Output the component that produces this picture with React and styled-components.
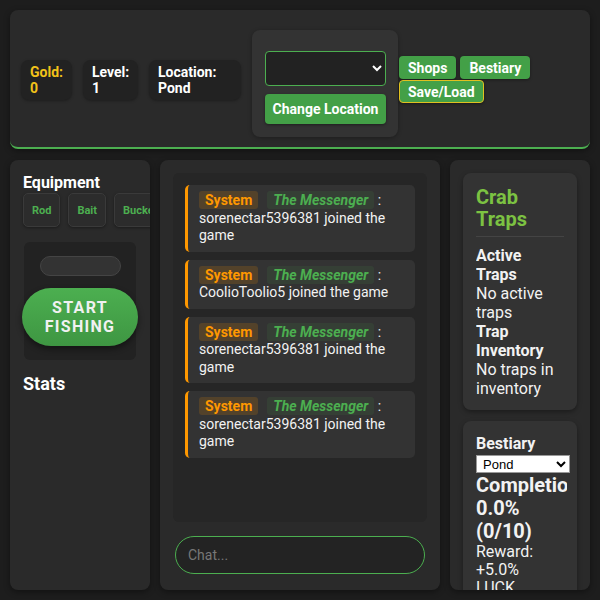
import React from "react";
import styled, { createGlobalStyle } from "styled-components";

const Global = createGlobalStyle`
  html, body {
    margin: 0;
    padding: 0;
    background: #1d1d1d;
    color: #fff;
    font-family: Roboto, "Liberation Sans", sans-serif;
    overflow: hidden;
  }
`;

const Page = styled.div`
  padding: 10px;
  display: flex;
  flex-direction: column;
  gap: 11px;
`;

const Header = styled.header`
  display: flex;
  align-items: center;
  gap: 11px;
  height: 99px;
  padding: 20px 11px 18px;
  background: #2a2a2a;
  border-radius: 8px;
  border-bottom: 2px solid #4caf50;
  box-shadow: 0 2px 6px rgba(0, 0, 0, 0.4);
`;

const Stat = styled.div`
  background: #222;
  border-radius: 8px;
  padding: 4px 9px;
  font-size: 14px;
  font-weight: 700;
  line-height: 16px;
  color: ${(p) => (p.$gold ? "#f2c31a" : "#fff")};
  width: ${(p) => p.$w || "auto"};
  box-sizing: border-box;
  box-shadow: 0 1px 3px rgba(0, 0, 0, 0.3);
`;

const LocationBox = styled.div`
  display: flex;
  flex-direction: column;
  gap: 8px;
  width: 146px;
  height: 107px;
  box-sizing: border-box;
  padding: 21px 12px 13px 13px;
  background: #333;
  border-radius: 8px;
  align-self: flex-start;
  box-shadow: 0 1px 4px rgba(0, 0, 0, 0.3);
`;

const Select = styled.select`
  width: 121px;
  height: 35px;
  background: #222;
  border: 1px solid #4caf50;
  border-radius: 4px;
  color: #fff;
`;

const GreenButton = styled.button`
  background: #43a047;
  color: #fff;
  border: ${(p) => (p.$save ? "1px solid #e0c020" : "1px solid transparent")};
  border-radius: 4px;
  font-family: inherit;
  font-weight: 700;
  font-size: 14px;
  line-height: 16px;
  padding: ${(p) => p.$pad || "3px 8px 2px"};
  width: ${(p) => p.$w || "auto"};
  height: ${(p) => p.$h || "auto"};
  box-shadow: 0 1px 3px rgba(0, 0, 0, 0.4);
`;

const ButtonGroup = styled.div`
  display: flex;
  flex-wrap: wrap;
  width: 136px;
  gap: 1px 4px;
  margin-left: -10px;
`;

const Main = styled.div`
  display: grid;
  grid-template-columns: 140px 280px 140px;
  gap: 10px;
  height: 430px;
`;

const Panel = styled.section`
  background: #2a2a2a;
  border-radius: 8px;
  padding: 13px;
  overflow: hidden;
  display: flex;
  flex-direction: column;
  box-sizing: border-box;
  box-shadow: 0 2px 6px rgba(0, 0, 0, 0.4);
`;

const Title = styled.h3`
  margin: ${(p) => p.$m || "0"};
  font-size: ${(p) => p.$size || "16px"};
  font-weight: 700;
  line-height: ${(p) => p.$lh || "19px"};
  color: ${(p) => p.$color || "#fff"};
`;

const EquipRow = styled.div`
  display: flex;
  gap: 8px;
  margin-top: 1px;
`;

const EquipSlot = styled.div`
  flex-shrink: 0;
  height: 34px;
  padding: 0 8px;
  box-sizing: border-box;
  border: 1px solid #3a3a3a;
  background: #2c2c2c;
  border-radius: 5px;
  display: flex;
  align-items: center;
  color: #4caf50;
  font-size: 11px;
  font-weight: 700;
  white-space: nowrap;
  box-shadow: 0 1px 3px rgba(0, 0, 0, 0.35);
`;

const FishingBox = styled.div`
  margin: 15px 1px 0;
  width: 112px;
  height: 118px;
  flex-shrink: 0;
  box-sizing: border-box;
  background: #222;
  border-radius: 6px;
  padding-top: 14px;
  display: flex;
  flex-direction: column;
  align-items: center;
  gap: 12px;
`;

const ProgressBar = styled.div`
  width: 81px;
  height: 20px;
  flex-shrink: 0;
  box-sizing: border-box;
  border-radius: 10px;
  background: #333;
  border: 1px solid #444;
`;

const StartButton = styled.button`
  width: 116px;
  height: 58px;
  flex-shrink: 0;
  border: none;
  border-radius: 29px;
  background: linear-gradient(180deg, #4caf50, #3e9642);
  color: #f1f1f1;
  font-family: inherit;
  font-weight: 700;
  font-size: 16px;
  line-height: 19px;
  letter-spacing: 1.3px;
  box-shadow: 0 3px 6px rgba(0, 0, 0, 0.45);
`;

const ChatLog = styled.div`
  height: 349px;
  flex-shrink: 0;
  box-sizing: border-box;
  background: #262626;
  border-radius: 6px;
  padding: 12px;
  display: flex;
  flex-direction: column;
  gap: 8px;
`;

const Message = styled.div`
  background: #333;
  border-left: 3px solid #ff9800;
  border-radius: 5px;
  padding: 7px 11px;
  font-size: 14px;
  line-height: 17.5px;
  color: #f2f2f2;
`;

const Tag = styled.span`
  font-weight: 700;
  padding: 1px 6px;
  margin-right: ${(p) => p.$mr || "0"};
  border-radius: 3px;
  font-style: ${(p) => (p.$italic ? "italic" : "normal")};
  color: ${(p) => p.$color};
  background: ${(p) => p.$bg};
`;

const ChatInput = styled.input`
  margin: 14px 2px 0;
  height: 38px;
  box-sizing: border-box;
  border: 1px solid #4caf50;
  border-radius: 20px;
  background: #232323;
  padding: 0 12px;
  font-family: inherit;
  font-size: 14px;
  color: #fff;
  &::placeholder {
    color: #777;
  }
`;

const InnerCard = styled.div`
  background: #333;
  border-radius: 8px;
  padding: 13px;
  flex-shrink: 0;
  height: ${(p) => p.$h || "auto"};
  box-sizing: border-box;
  margin-bottom: 11px;
  box-shadow: 0 2px 5px rgba(0, 0, 0, 0.35);
`;

const Divider = styled.hr`
  border: none;
  border-top: 1px solid #444;
  margin: 6px 0 9px;
`;

const Text = styled.div`
  font-size: ${(p) => p.$size || "16px"};
  font-weight: ${(p) => (p.$bold ? 700 : 400)};
  line-height: ${(p) => p.$lh || "19px"};
  color: #f2f2f2;
  max-width: ${(p) => p.$w || "none"};
  margin-right: ${(p) => p.$mr || "0"};
  white-space: ${(p) => (p.$nowrap ? "nowrap" : "normal")};
  overflow: hidden;
`;

const SmallSelect = styled.select`
  width: 94px;
  height: 18px;
  font-size: 13px;
  background: #fff;
  color: #000;
  border: 1px solid #999;
  border-radius: 0;
  padding: 0 2px;
  margin: 2px 0 1px;
`;

const messages = [
  "sorenectar5396381 joined the game",
  "CoolioToolio5 joined the game",
  "sorenectar5396381 joined the game",
  "sorenectar5396381 joined the game",
];

export default function App() {
  return (
    <>
      <Global />
      <Page>
        <Header>
          <Stat $gold $w="51px">
            Gold:
            <br />0
          </Stat>
          <Stat $w="55px">
            Level:
            <br />1
          </Stat>
          <Stat $w="92px">
            Location:
            <br />
            Pond
          </Stat>
          <LocationBox>
            <Select />
            <GreenButton $h="30px" $w="121px" $pad="0 4px">
              Change Location
            </GreenButton>
          </LocationBox>
          <ButtonGroup>
            <GreenButton>Shops</GreenButton>
            <GreenButton>Bestiary</GreenButton>
            <GreenButton $save>Save/Load</GreenButton>
          </ButtonGroup>
        </Header>

        <Main>
          <Panel>
            <Title>Equipment</Title>
            <EquipRow>
              <EquipSlot>Rod</EquipSlot>
              <EquipSlot>Bait</EquipSlot>
              <EquipSlot>Bucket</EquipSlot>
            </EquipRow>
            <FishingBox>
              <ProgressBar />
              <StartButton>
                START
                <br />
                FISHING
              </StartButton>
            </FishingBox>
            <Title $size="18px" $lh="22px" $m="13px 0 0">
              Stats
            </Title>
          </Panel>

          <Panel>
            <ChatLog>
              {messages.map((m, i) => (
                <Message key={i}>
                  <Tag $color="#ff9800" $bg="rgba(255,152,0,0.16)" $mr="9px">
                    System
                  </Tag>
                  <Tag $italic $color="#4caf50" $bg="rgba(76,175,80,0.1)">
                    The Messenger
                  </Tag>{" "}
                  : {m}
                </Message>
              ))}
            </ChatLog>
            <ChatInput placeholder="Chat..." />
          </Panel>

          <Panel>
            <InnerCard $h="237px">
              <Title $size="20px" $lh="22px" $color="#7cc242">
                Crab Traps
              </Title>
              <Divider />
              <Text $bold>Active Traps</Text>
              <Text>No active traps</Text>
              <Text $bold>Trap Inventory</Text>
              <Text>No traps in inventory</Text>
            </InnerCard>
            <InnerCard>
              <Text $bold>Bestiary</Text>
              <SmallSelect defaultValue="Pond">
                <option>Pond</option>
              </SmallSelect>
              <Text $size="20px" $lh="23px" $bold $nowrap $mr="-3px">
                Completion
              </Text>
              <Text $size="20px" $lh="23px" $bold>
                0.0% (0/10)
              </Text>
              <Text $lh="18px" $w="80px">
                Reward: +5.0% LUCK
              </Text>
            </InnerCard>
          </Panel>
        </Main>
      </Page>
    </>
  );
}
